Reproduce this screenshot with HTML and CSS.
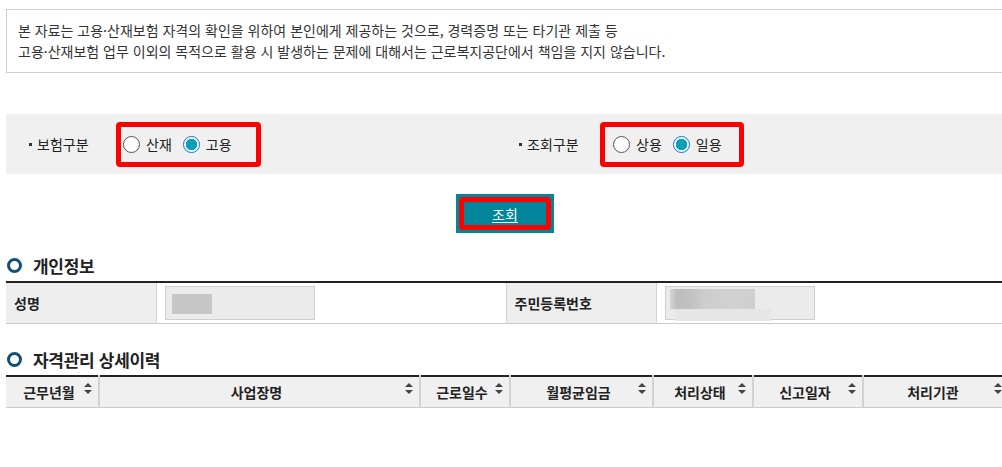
FILE: index.html
```html
<!DOCTYPE html>
<html lang="ko">
<head>
    <meta charset="UTF-8">
    <meta name="viewport" content="width=device-width, initial-scale=1.0">
    <title>자격이력 조회</title>
    <link rel="stylesheet" href="styles.css">
</head>
<body>
    <div class="container">
        <div class="notice">
            <p>본 자료는 고용·산재보험 자격의 확인을 위하여 본인에게 제공하는 것으로, 경력증명 또는 타기관 제출 등</p>
            <p>고용·산재보험 업무 이외의 목적으로 활용 시 발생하는 문제에 대해서는 근로복지공단에서 책임을 지지 않습니다.</p>
        </div>

        <!-- 검색 조건 -->
        <div class="search-bar">
            <div class="search-item">
                <span class="search-label">보험구분</span>
                <div class="radio-box">
                    <span class="radio"></span><span class="radio-text">산재</span>
                    <span class="radio checked"></span><span class="radio-text">고용</span>
                </div>
            </div>
            <div class="search-item second">
                <span class="search-label">조회구분</span>
                <div class="radio-box">
                    <span class="radio"></span><span class="radio-text">상용</span>
                    <span class="radio checked"></span><span class="radio-text">일용</span>
                </div>
            </div>
        </div>

        <div class="btn-area">
            <button type="button" class="button"><span class="button-inner">조회</span></button>
        </div>

        <!-- 개인정보 -->
        <h2 class="section-title">개인정보</h2>
        <table class="info-table">
            <tr>
                <th class="w150">성명</th>
                <td class="w350">
                    <div class="masked"><span class="blur name-blur"></span></div>
                </td>
                <th class="w150">주민등록번호</th>
                <td>
                    <div class="masked">
                        <span class="blur id-blur"></span>
                        <span class="blur id-blur-low"></span>
                    </div>
                </td>
            </tr>
        </table>

        <!-- 자격관리 상세이력 -->
        <h2 class="section-title second-title">자격관리 상세이력</h2>
        <table class="list-table">
            <thead>
                <tr>
                    <th class="c1">근무년월<span class="sort"></span></th>
                    <th class="c2">사업장명<span class="sort"></span></th>
                    <th class="c3">근로일수<span class="sort"></span></th>
                    <th class="c4">월평균임금<span class="sort"></span></th>
                    <th class="c5">처리상태<span class="sort"></span></th>
                    <th class="c6">신고일자<span class="sort"></span></th>
                    <th>처리기관<span class="sort"></span></th>
                </tr>
            </thead>
        </table>
    </div>
</body>
</html>
```

FILE: styles.css
```css
html, body {
    overflow: hidden;
}
body {
    font-family: "Noto Sans CJK KR", "Noto Sans", sans-serif;
    background-color: #ffffff;
    color: #222;
    margin: 0;
    padding: 0;
}
* {
    box-sizing: border-box;
}
.container {
    width: 1002px;
    margin-left: 6px;
    padding-top: 9px;
}
.notice {
    border: 1px solid #ccd0d3;
    padding: 10px 11px;
    font-size: 14px;
    line-height: 21px;
    color: #333;
}
.notice p {
    margin: 0;
}
.search-bar {
    margin-top: 41px;
    height: 60px;
    background-color: #f0f0f0;
    display: flex;
    align-items: center;
}
.search-item {
    display: flex;
    align-items: center;
    width: 490px;
    padding-left: 23px;
}
.search-label {
    font-size: 14px;
    width: 87px;
    display: flex;
    align-items: center;
}
.search-label::before {
    content: "";
    width: 3px;
    height: 3px;
    background-color: #333;
    margin-right: 5px;
}
.second .search-label {
    width: 81px;
}
.radio-box {
    display: flex;
    align-items: center;
    height: 45px;
    border: 5px solid #ff0000;
    border-radius: 4px;
    padding: 0 24px 0 2px;
}
.second .radio-box {
    padding: 0 17px 0 8px;
}
.radio {
    width: 17px;
    height: 17px;
    border: 1px solid #555;
    border-radius: 50%;
    background-color: #fff;
    margin-right: 6px;
}
.radio.checked {
    border-color: #0a6ee6;
    background: radial-gradient(circle, #0aa0b8 0, #0aa0b8 5.5px, #fff 6px);
    margin-left: 11px;
}
.radio-text {
    font-size: 14px;
}
.btn-area {
    display: flex;
    justify-content: center;
    margin-top: 20px;
}
.button {
    background-color: #00859b;
    border: none;
    padding: 3px;
    width: 98px;
    height: 39px;
    margin-left: -4px;
    cursor: pointer;
    display: flex;
}
.button-inner {
    flex: 1;
    border: 5px solid #ff0000;
    border-radius: 4px;
    color: #fff;
    font-family: "Noto Sans CJK KR", sans-serif;
    font-size: 14px;
    display: flex;
    align-items: center;
    justify-content: center;
    text-decoration: underline;
    text-underline-offset: 2px;
}
.section-title {
    font-size: 17px;
    font-weight: bold;
    margin: 20px 0 0 0;
    height: 25px;
    display: flex;
    align-items: center;
    color: #222;
    letter-spacing: -0.3px;
}
.section-title::before {
    content: "";
    flex: none;
    width: 9px;
    height: 9px;
    border: 3px solid #124f78;
    border-radius: 50%;
    margin: 0 11px 0 1px;
}
.second-title {
    margin-top: 23px;
}
table {
    width: 100%;
    border-collapse: collapse;
    margin-top: 3px;
    table-layout: fixed;
}
.info-table {
    border-top: 2px solid #222;
    border-bottom: 1px solid #ccc;
}
.info-table th {
    background-color: #eeeeee;
    text-align: left;
    font-size: 14px;
    font-weight: bold;
    padding: 0 8px;
    height: 40px;
    border-right: 1px solid #d4d4d4;
    border-left: 1px solid #d4d4d4;
}
.info-table th:first-child {
    border-left: none;
}
.info-table td {
    padding: 3px 8px;
    height: 40px;
}
.w150 {
    width: 150px;
}
.w350 {
    width: 350px;
}
.masked {
    width: 150px;
    height: 34px;
    border: 1px solid #cfcfcf;
    background-color: #ebebeb;
    position: relative;
}
.blur {
    position: absolute;
    background-color: #c6c6c6;
}
.name-blur {
    left: 6px;
    top: 7px;
    width: 40px;
    height: 20px;
}
.id-blur {
    left: 4px;
    top: 2px;
    width: 85px;
    height: 20px;
    background: linear-gradient(to right, #d6d6d6 0, #bdbdbd 8%, #c2c2c2 25%, #cdcdcd 40%, #d1d1d1 70%, #cfcfcf 100%);
}
.id-blur-low {
    left: 9px;
    top: 22px;
    width: 96px;
    height: 12px;
    background-color: #e6e6e6;
}
.list-table {
    border-top: 2px solid #222;
    border-bottom: 1px solid #ccc;
}
.list-table th {
    background-color: #f0f0f0;
    font-size: 14px;
    font-weight: bold;
    height: 31px;
    padding: 0 14px 0 8px;
    text-align: center;
    white-space: nowrap;
    position: relative;
    border-left: 2px solid #d2d2d2;
}
.list-table th:first-child {
    border-left: none;
}
.c1 { width: 93px; }
.c2 { width: 321px; }
.c3 { width: 90px; }
.c4 { width: 143px; }
.c5 { width: 100px; }
.c6 { width: 110px; }
.sort {
    position: absolute;
    right: 6px;
    top: 6px;
    width: 8px;
    height: 11px;
}
.sort::before, .sort::after {
    content: "";
    position: absolute;
    left: 0;
    border-left: 4px solid transparent;
    border-right: 4px solid transparent;
}
.sort::before {
    top: 0;
    border-bottom: 4.5px solid #444;
}
.sort::after {
    top: 6.5px;
    border-top: 4.5px solid #444;
}
```
